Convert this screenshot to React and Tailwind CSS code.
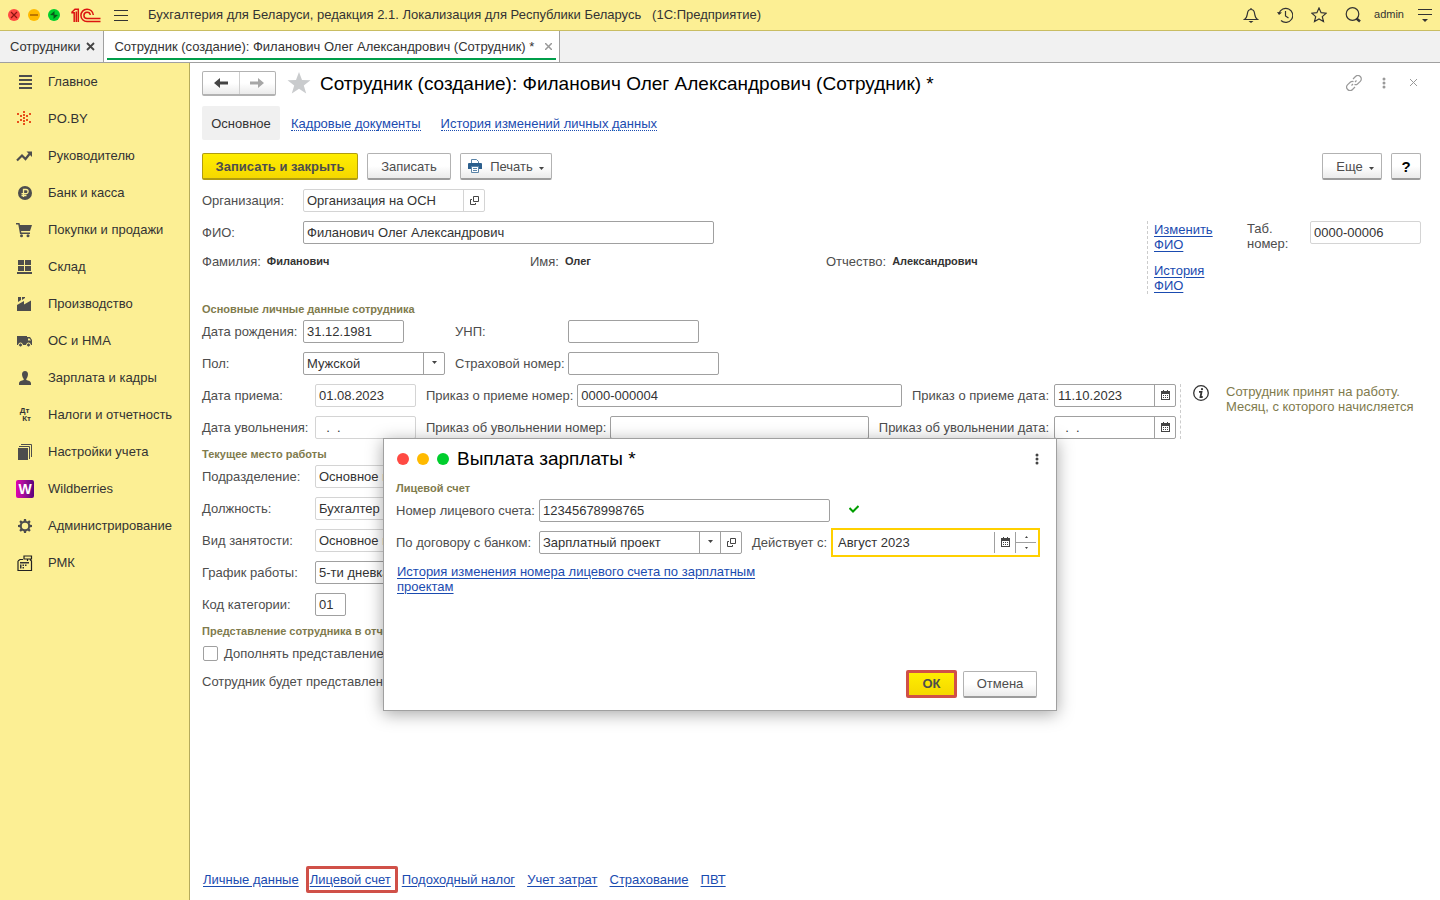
const menu = [
  { label: "Главное", icon: "list" },
  { label: "PO.BY", icon: "poby" },
  { label: "Руководителю", icon: "trend" },
  { label: "Банк и касса", icon: "ruble" },
  { label: "Покупки и продажи", icon: "cart" },
  { label: "Склад", icon: "warehouse" },
  { label: "Производство", icon: "factory" },
  { label: "ОС и НМА", icon: "truck" },
  { label: "Зарплата и кадры", icon: "person" },
  { label: "Налоги и отчетность", icon: "dtkt" },
  { label: "Настройки учета", icon: "stack" },
  { label: "Wildberries", icon: "wb" },
  { label: "Администрирование", icon: "gear" },
  { label: "РМК", icon: "register" },
];

const footerLinks = ["Подоходный налог", "Учет затрат", "Страхование", "ПВТ"];

const pobyDots = [
  [8, 1], [8, 4], [8, 7], [8, 10], [8, 13],
  [5, 5], [11, 5], [5, 9], [11, 9],
  [2, 3], [14, 3], [2, 11], [14, 11],
];

const gearTeeth = [0, 45, 90, 135, 180, 225, 270, 315];

function MenuIcon({ name }) {
  if (name === "wb") {
    return (
      <span className="flex size-[18px] items-center justify-center rounded-xs bg-linear-to-r from-[#e000b0] to-[#5a007c] text-sm font-bold text-white">
        W
      </span>
    );
  }
  if (name === "dtkt") {
    return (
      <span className="flex w-4 flex-col pr-px pl-0.5 text-[8px] leading-2 font-bold">
        <span>Дт</span>
        <span className="self-end">Кт</span>
      </span>
    );
  }
  return (
    <svg className="size-4 overflow-visible" viewBox="0 0 16 16" fill="#4d4d4d">
      {name === "list" && <path d="M3 1h13v2H3zM3 5h13v2H3zM3 9h13v2H3zM3 13h13v2H3z" />}
      {name === "poby" &&
        pobyDots.map(([x, y]) => <rect key={`${x}-${y}`} x={x - 1} y={y - 1} width="2" height="2" fill="#e8501c" />)}
      {name === "trend" && (
        <path d="M1 12.500l5-5 3.500 3.500 4-5" fill="none" stroke="#4d4d4d" strokeWidth="2.200" />
      )}
      {name === "trend" && <path d="M10.500 3.500H16V9z" />}
      {name === "ruble" && (
        <>
          <circle cx="9" cy="8" r="7" />
          <path d="M7.500 12V4.500h2.500a2 2 0 010 4.200H5.500M5.500 10.500h5" fill="none" stroke="#fcef94" strokeWidth="1.300" />
        </>
      )}
      {name === "cart" && (
        <>
          <path d="M0 1h3.500l.5 2h12l-2 6H5l.4 1.500H14V12H4L2.300 2.500H0z" />
          <circle cx="5.500" cy="13.800" r="1.500" />
          <circle cx="12" cy="13.800" r="1.500" />
        </>
      )}
      {name === "warehouse" && <path d="M2 1h6v5H2zM9 1h6v5H9zM2 7h6v5H2zM9 7h6v5H9zM1 13h15v2H1z" />}
      {name === "factory" && <path d="M2 1h3v3L2 6zM6 1h3v1L6 4zM1 15V9l7-4v3.500l7-4V15z" />}
      {name === "truck" && (
        <>
          <path d="M1 3h10v1h3l2 3v5H1z" />
          <path d="M12 5.500h1.500l1.500 2h-3z" fill="#fcef94" />
          <circle cx="4.500" cy="12" r="2" stroke="#fcef94" />
          <circle cx="12.500" cy="12" r="2" stroke="#fcef94" />
        </>
      )}
      {name === "person" && (
        <path d="M9 1c2 0 3 1.400 3 3.300C12 6.500 10.800 8.500 10.300 9v1c2 .6 4.700 1 4.700 3.500V15H3v-1.500C3 11 5.700 10.600 7.700 10V9C7.200 8.500 6 6.500 6 4.300 6 2.400 7 1 9 1z" />
      )}
      {name === "stack" && (
        <>
          <path d="M2 4h10v12H2z" />
          <path d="M3 2.500h10.500V15M5 .5h10.500V13" fill="none" stroke="#4d4d4d" />
        </>
      )}
      {name === "gear" && (
        <>
          <circle cx="9" cy="8" r="4.200" fill="none" stroke="#4d4d4d" strokeWidth="2" />
          {gearTeeth.map((a) => (
            <path key={a} d="M7.500 3.700L8 1h2l.5 2.700z" transform={`rotate(${a} 9 8)`} />
          ))}
        </>
      )}
      {name === "register" && (
        <>
          <path
            d="M2 6v9.500h13.500V6l-1.500-1.500M8 1h7.500v3H8zM11.500 4v2M2 6l2-1.500h3"
            fill="none"
            stroke="#222"
            strokeWidth="1.200"
          />
          <path d="M4 7h9v1.500H4zM4 9.500h1.500v4H4zM6.500 9.500H8v1.500H6.500zM9 9.500h1.500V11H9zM6.500 12H8v1.500H6.500z" fill="#333" />
        </>
      )}
    </svg>
  );
}

function OpenIcon() {
  return (
    <svg className="mb-px size-[9px]" viewBox="0 0 9 9" fill="none" stroke="#444">
      <path d="M3.500.5h5v5h-5zM2 3.500H.5v5h5V7" />
    </svg>
  );
}

function CalendarIcon() {
  return (
    <svg className="mb-0.5 h-2.5 w-[9px]" viewBox="0 0 9 10" fill="#444">
      <path d="M0 1h9v9H0zM1 4v5h7V4z" fillRule="evenodd" />
      <path d="M2 0h1v2H2zM6 0h1v2H6zM2 5h1v1H2zM4 5h1v1H4zM6 5h1v1H6zM2 7h1v1H2zM4 7h1v1H4zM6 7h1v1H6z" />
    </svg>
  );
}

function Caret({ className = "" }) {
  return (
    <svg className={`h-[3px] w-[5px] ${className}`} viewBox="0 0 5 3" fill="#444">
      <path d="M0 0h5L2.500 3z" />
    </svg>
  );
}

function Dots() {
  return (
    <svg className="h-3 w-1" viewBox="0 0 4 12" fill="currentColor">
      <circle cx="2" cy="2" r="1.500" />
      <circle cx="2" cy="6" r="1.500" />
      <circle cx="2" cy="10" r="1.500" />
    </svg>
  );
}

// Bordered text box, optionally with small buttons at its right side.
function Field({ id, value = "", muted, className = "", children }) {
  return (
    <div
      className={`flex h-[23px] min-w-0 rounded-xs border bg-white ${muted ? "border-[#d4d4d4]" : "border-[#a0a0a0]"} ${className}`}
    >
      <input
        id={id}
        defaultValue={value}
        readOnly={muted}
        className="w-0 min-w-0 flex-1 bg-transparent px-[3px] whitespace-pre text-[#333] outline-none"
      />
      {children}
    </div>
  );
}

function FieldButton({ label, muted, children }) {
  return (
    <button
      aria-label={label}
      className={`flex w-[21px] shrink-0 items-center justify-center border-l ${muted ? "border-[#d4d4d4]" : "border-[#a0a0a0]"}`}
    >
      {children}
    </button>
  );
}

function SelectField({ id, value, className = "", children }) {
  return (
    <div className={`flex h-[23px] rounded-xs border border-[#a0a0a0] bg-white ${className}`}>
      <div className="relative flex flex-1">
        <select id={id} defaultValue={value} className="w-full appearance-none px-[3px] text-[#333] outline-none">
          <option>{value}</option>
        </select>
        <span className="pointer-events-none absolute inset-y-0 right-0 flex w-[21px] items-center justify-center border-l border-[#a0a0a0]">
          <Caret className="mb-0.5" />
        </span>
      </div>
      {children}
    </div>
  );
}

function Button({ primary, className = "", children }) {
  return (
    <button
      className={`flex h-[27px] items-center justify-center rounded-xs border border-b-2 bg-linear-to-b ${
        primary
          ? "border-[#b09c10] from-[#ffee00] to-[#f5d800] font-bold"
          : "border-[#b2b2b2] border-b-[#9c9c9c] from-white from-50% to-[#ebebeb]"
      } ${className}`}
    >
      {children}
    </button>
  );
}

function Heading({ children }) {
  return <h2 className="text-[11px] leading-3 font-bold whitespace-nowrap text-[#7f7b4d]">{children}</h2>;
}

function Link({ className = "", children }) {
  return (
    <a href="#" className={`text-[#1a4bb0] underline underline-offset-2 ${className}`}>
      {children}
    </a>
  );
}

function TopBar() {
  return (
    <header className="flex h-[31px] shrink-0 items-center border-b border-[#c9bd62] bg-[#fcef94] pr-2 pl-2 text-[#333]">
      <div className="flex gap-2">
        <button aria-label="Закрыть">
          <svg className="size-3" viewBox="0 0 12 12">
            <circle cx="6" cy="6" r="6" fill="#ff4a43" />
            <path d="M3 3l6 6M9 3l-6 6" stroke="#8c1512" strokeWidth="1.200" />
          </svg>
        </button>
        <button aria-label="Свернуть">
          <svg className="size-3" viewBox="0 0 12 12">
            <circle cx="6" cy="6" r="6" fill="#ffba00" />
            <path d="M2 6h8" stroke="#a05c00" strokeWidth="1.400" />
          </svg>
        </button>
        <button aria-label="Развернуть">
          <svg className="size-3" viewBox="0 0 12 12">
            <circle cx="6" cy="6" r="6" fill="#00ce2d" />
            <path d="M6.500 2v4.500L2 6zM5.500 10V5.500L10 6z" fill="#07591a" />
          </svg>
        </button>
      </div>
      <svg className="ml-[11px] h-[15px] w-[30px]" viewBox="0 0 30 15" fill="none" stroke="#dc1410" strokeWidth="1.500">
        <path d="M.3 4.800H3.200V14M.6 4.500L4 1.200H7.300V14M5.300 3.500V14" />
        <path d="M22.300 7A6.200 6.200 0 1 0 16 13.600H29.500" />
        <path d="M19.300 7A3.200 3.200 0 1 0 16 10.600H29.500" />
      </svg>
      <button aria-label="Меню" className="ml-[13px] flex w-3.5 flex-col gap-1">
        <span className="h-px bg-[#333]" />
        <span className="h-px bg-[#333]" />
        <span className="h-px bg-[#333]" />
      </button>
      <h1 className="ml-5 flex-1 truncate pb-0.5">
        Бухгалтерия для Беларуси, редакция 2.1. Локализация для Республики Беларусь &nbsp; (1С:Предприятие)
      </h1>
      <div className="flex items-center gap-[18px]">
        <button aria-label="Уведомления">
          <svg className="size-4" viewBox="0 0 16 16" fill="none" stroke="#333" strokeWidth="1.200">
            <path d="M1.500 12.500C4 11 4 9 4.500 6c.3-2 1.500-3.500 3.500-3.500s3.200 1.500 3.500 3.500c.5 3 .5 5 3 6.500zM8 2.500V1" />
            <path d="M5.500 14h5L8 16z" fill="#333" stroke="none" />
          </svg>
        </button>
        <button aria-label="История">
          <svg className="size-4" viewBox="0 0 16 16" fill="none" stroke="#333" strokeWidth="1.200">
            <path d="M2 6.500A7 7 0 1 1 4 13.500M8.500 4v5l3 2" />
            <path d="M0 5l2 3 3-2.500z" fill="#333" stroke="none" />
          </svg>
        </button>
        <button aria-label="Избранное">
          <svg className="size-4" viewBox="0 0 16 16" fill="none" stroke="#333" strokeWidth="1.200">
            <path d="M8 1l2.100 4.700 5.100.5-3.900 3.400 1.200 5L8 12l-4.500 2.600 1.200-5L.8 6.200l5.100-.5z" />
          </svg>
        </button>
        <button aria-label="Поиск">
          <svg className="size-4" viewBox="0 0 16 16" fill="none" stroke="#333" strokeWidth="1.200">
            <circle cx="7.500" cy="7" r="6.300" />
            <path d="M11.500 11.500l3.500 3" strokeWidth="2.500" />
          </svg>
        </button>
      </div>
      <span className="ml-[13px] pb-0.5 text-[11px]">admin</span>
      <button aria-label="Настройки" className="ml-3.5">
        <svg className="h-3.5 w-3.5" viewBox="0 0 14 14">
          <path d="M0 1.500h14M0 6.500h14" stroke="#333" />
          <path d="M4 11h6l-3 3z" fill="#333" />
        </svg>
      </button>
    </header>
  );
}

function Tabs() {
  return (
    <nav className="flex h-8 shrink-0 border-b border-[#a0a0a0] bg-[#f1f1f1] text-[#333]">
      <button className="flex items-center gap-1.5 border-r border-[#a0a0a0] pr-2 pl-2.5">
        Сотрудники
        <svg className="size-[9px]" viewBox="0 0 9 9" stroke="#444" strokeWidth="1.800">
          <path d="M1 1l7 7M8 1L1 8" />
        </svg>
      </button>
      <button className="flex border-r border-[#a0a0a0] bg-white px-[3px] pb-0.5">
        <span className="flex h-full items-center gap-[11px] border-b-2 border-[#009e4a] pt-[3px] pr-1 pl-[7px]">
          Сотрудник (создание): Филанович Олег Александрович (Сотрудник) *
          <svg className="size-[7px]" viewBox="0 0 7 7" stroke="#999" strokeWidth="1.500">
            <path d="M0 0l7 7M7 0L0 7" />
          </svg>
        </span>
      </button>
    </nav>
  );
}

function Sidebar() {
  return (
    <aside className="w-[190px] shrink-0 border-r border-[#b5ab5c] bg-[#fcef94]">
      {menu.map((item) => (
        <button key={item.label} className="flex h-[37px] w-full items-center pl-4 text-[#333]">
          <span className="flex w-8 items-center">
            <MenuIcon name={item.icon} />
          </span>
          {item.label}
        </button>
      ))}
    </aside>
  );
}

function PageHeader() {
  return (
    <>
      <div className="flex items-center">
        <div className="flex h-[25px] w-[74px] rounded-xs border border-b-2 border-[#b2b2b2] bg-linear-to-b from-white from-50% to-[#ebebeb]">
          <button aria-label="Назад" className="flex flex-1 items-center justify-center border-r border-[#cfcfcf]">
            <svg className="h-2.5 w-3.5" viewBox="0 0 14 10" fill="#444">
              <path d="M0 5l6-5v3.500h8v3H6V10z" />
            </svg>
          </button>
          <button aria-label="Вперед" className="flex flex-1 items-center justify-center">
            <svg className="h-2.5 w-3.5" viewBox="0 0 14 10" fill="#a6a6a6">
              <path d="M14 5L8 0v3.500H0v3h8V10z" />
            </svg>
          </button>
        </div>
        <button aria-label="В избранное" className="ml-[11px]">
          <svg className="h-6 w-6" viewBox="0 0 24 24" fill="#c9cbcd">
            <path d="M12 0l3 8 8.500.2-6.700 5.200L19.200 21.500 12 16.800l-7.200 4.700 2.400-8.100L.5 8.200 9 8z" />
          </svg>
        </button>
        <h2 className="ml-[9px] flex-1 text-[19px] leading-6 text-black">
          Сотрудник (создание): Филанович Олег Александрович (Сотрудник) *
        </h2>
        <div className="flex items-center pr-1 pb-0.5 text-[#999]">
          <button aria-label="Ссылка">
            <svg className="size-4" viewBox="0 0 16 16" fill="none" stroke="currentColor" strokeWidth="1.200">
              <path d="M7 4l2.500-2.500a3.200 3.200 0 014.800 4.800L11.500 9c-1 .8-2 .9-3 .4M9 12l-2.500 2.500a3.200 3.200 0 01-4.800-4.800L4.500 7c1-.8 2-.9 3-.4M5.500 10.500l1.500-1.500M9 7l1.500-1.500" />
            </svg>
          </button>
          <button aria-label="Действия" className="ml-5">
            <Dots />
          </button>
          <button aria-label="Закрыть форму" className="ml-6">
            <svg className="size-[7px]" viewBox="0 0 7 7" stroke="currentColor">
              <path d="M0 0l7 7M7 0L0 7" />
            </svg>
          </button>
        </div>
      </div>
      <nav className="mt-2.5 flex items-center">
        <button className="h-[34px] w-[78px] rounded-xs bg-[#f0f0f0] text-[#333]">Основное</button>
        <a href="#" className="mt-px ml-[11px] border-b border-dotted border-[#1a4bb0] leading-[13px] text-[#1a4bb0]">
          Кадровые документы
        </a>
        <a href="#" className="mt-px ml-5 border-b border-dotted border-[#1a4bb0] leading-[13px] text-[#1a4bb0]">
          История изменений личных данных
        </a>
      </nav>
      <div className="mt-[13px] flex">
        <Button primary className="w-[156px]">
          Записать и закрыть
        </Button>
        <Button className="ml-[9px] w-[84px]">Записать</Button>
        <Button className="ml-[9px] w-[92px]">
          <svg className="mr-2 size-3.5" viewBox="0 0 14 14">
            <path d="M3.500 4V.5h5l2 2V4" fill="#fff" stroke="#5a84a8" />
            <path d="M0 5a1 1 0 011-1h12a1 1 0 011 1v5h-3V8H3v2H0z" fill="#2c5f8d" />
            <path d="M3.500 7.500h7v6h-7zM5 9.500h4M5 11.500h4" fill="#fff" stroke="#5a84a8" />
          </svg>
          Печать
          <Caret className="mt-1 ml-1.5" />
        </Button>
        <Button className="ml-auto w-[60px] pl-1.5">
          Еще
          <Caret className="mt-1 ml-1.5" />
        </Button>
        <Button className="ml-[9px] w-[30px] text-[15px] font-bold text-black">?</Button>
      </div>
    </>
  );
}

function NamePart({ label, value, className = "" }) {
  return (
    <div className={`flex items-center ${className}`}>
      {label}:<b className="ml-1.5 text-[11px] text-[#333]">{value}</b>
    </div>
  );
}

function PersonForm() {
  return (
    <>
      <div className="mt-[9px] flex items-center">
        <label htmlFor="org" className="w-[101px]">
          Организация:
        </label>
        <Field id="org" value="Организация на ОСН" muted className="w-[182px]">
          <FieldButton label="Открыть организацию" muted>
            <OpenIcon />
          </FieldButton>
        </Field>
      </div>

      <div className="mt-[9px] flex items-start">
        <div className="flex-1">
          <div className="flex items-center">
            <label htmlFor="fio" className="w-[101px]">
              ФИО:
            </label>
            <Field id="fio" value="Филанович Олег Александрович" className="w-[411px]" />
          </div>
          <div className="mt-2.5 flex">
            <NamePart label="Фамилия" value="Филанович" className="w-[328px]" />
            <NamePart label="Имя" value="Олег" className="w-[296px]" />
            <NamePart label="Отчество" value="Александрович" />
          </div>
        </div>
        <div className="flex h-[73px] w-[100px] flex-col gap-[11px] border-l border-dashed border-[#ccc] pt-px pr-5 pl-1.5">
          <Link>Изменить ФИО</Link>
          <Link>История ФИО</Link>
        </div>
        <label htmlFor="tab-number" className="w-[63px] pr-4">
          Таб. номер:
        </label>
        <Field id="tab-number" value="0000-00006" muted className="w-[111px]" />
      </div>

      <div className="mt-[9px]">
        <Heading>Основные личные данные сотрудника</Heading>
      </div>
      <div className="mt-[5px] grid grid-cols-[101px_152px_113px_151px] items-center gap-y-[9px]">
        <label htmlFor="birth">Дата рождения:</label>
        <Field id="birth" value="31.12.1981" className="w-[101px]" />
        <label htmlFor="unp">УНП:</label>
        <Field id="unp" className="w-[131px]" />
        <label htmlFor="sex">Пол:</label>
        <SelectField id="sex" value="Мужской" className="w-[142px]" />
        <label htmlFor="insurance">Страховой номер:</label>
        <Field id="insurance" />
      </div>

      <div className="mt-[9px] flex">
        <div className="flex flex-1 flex-col gap-[9px]">
          <div className="flex items-center">
            <label htmlFor="hired" className="w-[113px]">
              Дата приема:
            </label>
            <Field id="hired" value="01.08.2023" muted className="w-[101px]" />
            <label htmlFor="hire-no" className="mr-1 ml-2.5">
              Приказ о приеме номер:
            </label>
            <Field id="hire-no" value="0000-000004" className="flex-1" />
            <label htmlFor="hire-date" className="mr-[5px] ml-2.5">
              Приказ о приеме дата:
            </label>
            <Field id="hire-date" value="11.10.2023" className="w-[122px]">
              <FieldButton label="Выбрать дату приема">
                <CalendarIcon />
              </FieldButton>
            </Field>
          </div>
          <div className="flex items-center">
            <label htmlFor="fired" className="w-[113px]">
              Дата увольнения:
            </label>
            <Field id="fired" value="  .  ." muted className="w-[101px]" />
            <label htmlFor="fire-no" className="mr-1 ml-2.5">
              Приказ об увольнении номер:
            </label>
            <Field id="fire-no" className="flex-1" />
            <label htmlFor="fire-date" className="mr-[5px] ml-2.5">
              Приказ об увольнении дата:
            </label>
            <Field id="fire-date" value="  .  ." className="w-[122px]">
              <FieldButton label="Выбрать дату увольнения">
                <CalendarIcon />
              </FieldButton>
            </Field>
          </div>
        </div>
        <div className="ml-1 flex w-[241px] border-l border-dashed border-[#ccc] pl-3">
          <svg className="mt-px size-4 shrink-0" viewBox="0 0 16 16" fill="none" stroke="#333" strokeWidth="1.300">
            <circle cx="8" cy="8" r="7.300" />
            <path d="M6 6.800h2.500L7.500 12h2.200" strokeWidth="1.800" />
            <circle cx="9" cy="4.200" r="1.100" fill="#333" stroke="none" />
          </svg>
          <p className="ml-[17px] text-[#7f7b4d]">Сотрудник принят на работу. Месяц, с которого начисляется</p>
        </div>
      </div>

      <div className="mt-[9px]">
        <Heading>Текущее место работы</Heading>
      </div>
      <div className="mt-[5px] grid grid-cols-[113px_340px] items-center gap-y-[9px]">
        <label htmlFor="department">Подразделение:</label>
        <Field id="department" value="Основное подразделение" muted />
        <label htmlFor="position">Должность:</label>
        <Field id="position" value="Бухгалтер" muted />
        <label htmlFor="employment">Вид занятости:</label>
        <Field id="employment" value="Основное место работы" muted />
        <label htmlFor="schedule">График работы:</label>
        <Field id="schedule" value="5-ти дневка" />
        <label htmlFor="category">Код категории:</label>
        <Field id="category" value="01" className="w-[31px]" />
      </div>

      <div className="mt-[9px]">
        <Heading>Представление сотрудника в отчетах</Heading>
      </div>
      <div className="mt-[9px] flex items-center gap-1.5">
        <input
          id="extend"
          type="checkbox"
          className="ml-px size-[15px] appearance-none rounded-xs border border-[#a0a0a0] bg-white checked:bg-[#ffe600]"
        />
        <label htmlFor="extend">Дополнять представление</label>
      </div>
      <p className="mt-[13px]">Сотрудник будет представлен</p>
    </>
  );
}

function SalaryDialog() {
  return (
    <section
      role="dialog"
      aria-label="Выплата зарплаты"
      className="absolute top-[438px] left-1/2 w-[674px] -translate-x-1/2 border border-[#a0a0a0] bg-white px-3 pb-3 shadow-[0_3px_16px_rgba(0,0,0,0.35)]"
    >
      <div className="flex h-10 items-center pr-[5px] pl-px">
        <button aria-label="Закрыть окно" className="size-3 rounded-full bg-[#ff4a43]" />
        <button aria-label="Свернуть окно" className="ml-2 size-3 rounded-full bg-[#ffba00]" />
        <button aria-label="Развернуть окно" className="ml-2 size-3 rounded-full bg-[#00ce2d]" />
        <h2 className="ml-2 flex-1 text-[19px] leading-6 text-black">Выплата зарплаты *</h2>
        <button aria-label="Действия окна" className="text-[#444]">
          <Dots />
        </button>
      </div>
      <div className="mt-[3px]">
        <Heading>Лицевой счет</Heading>
      </div>
      <div className="mt-[5px] flex items-center">
        <label htmlFor="account" className="w-[143px]">
          Номер лицевого счета:
        </label>
        <Field id="account" value="12345678998765" className="w-[291px]" />
        <svg className="mb-1 ml-[19px] h-2 w-2.5" viewBox="0 0 10 8" fill="none" stroke="#009e00" strokeWidth="2">
          <path d="M.5 3l3.500 3.500L9.500 1" />
        </svg>
      </div>
      <div className="mt-1.5 flex items-center">
        <label htmlFor="contract" className="w-[143px]">
          По договору с банком:
        </label>
        <SelectField id="contract" value="Зарплатный проект" className="w-[203px]">
          <FieldButton label="Открыть договор">
            <OpenIcon />
          </FieldButton>
        </SelectField>
        <label htmlFor="valid-from" className="ml-2.5 w-[79px]">
          Действует с:
        </label>
        <div className="flex h-[29px] w-[209px] border-2 border-[#ffd000] py-0.5 pr-0.5 pl-1">
          <input
            id="valid-from"
            defaultValue="Август 2023"
            className="w-0 flex-1 bg-transparent pl-px text-[#333] outline-none"
          />
          <FieldButton label="Выбрать месяц">
            <CalendarIcon />
          </FieldButton>
          <div className="flex w-[21px] flex-col border-l border-[#a0a0a0]">
            <button
              aria-label="Следующий месяц"
              className="flex flex-1 items-center justify-center border-b border-[#a0a0a0]"
            >
              <svg className="h-0.5 w-[3px]" viewBox="0 0 3 2" fill="#444">
                <path d="M0 2h3L1.500 0z" />
              </svg>
            </button>
            <button aria-label="Предыдущий месяц" className="flex flex-1 items-center justify-center">
              <svg className="h-0.5 w-[3px]" viewBox="0 0 3 2" fill="#444">
                <path d="M0 0h3L1.500 2z" />
              </svg>
            </button>
          </div>
        </div>
      </div>
      <p className="mt-[7px] ml-px w-[380px]">
        <Link>История изменения номера лицевого счета по зарплатным проектам</Link>
      </p>
      <div className="mt-[76px] flex items-center justify-end gap-1.5 pr-[7px]">
        <div className="rounded-xs border-3 border-[#d05048]">
          <button className="flex h-[22px] w-[45px] items-center justify-center bg-linear-to-b from-[#ffee00] to-[#f5d800] pb-0.5 font-bold">
            ОК
          </button>
        </div>
        <Button className="w-[74px]">Отмена</Button>
      </div>
    </section>
  );
}

export default function App() {
  return (
    <div className="relative flex min-h-screen flex-col bg-white font-['Liberation_Sans',Arial,sans-serif] text-[13px] leading-[15px] text-[#4d4d4d]">
      <TopBar />
      <Tabs />
      <div className="flex flex-1">
        <Sidebar />
        <main className="flex min-w-0 flex-1 flex-col pt-2 pr-[19px] pb-[7px] pl-3">
          <PageHeader />
          <PersonForm />
          <nav className="mt-auto flex items-center">
            <Link className="mr-[7px] ml-px">Личные данные</Link>
            <span className="flex h-[27px] items-center rounded-xs border-3 border-[#d05048] pr-1 pl-px">
              <Link>Лицевой счет</Link>
            </span>
            <div className="ml-1 flex gap-3">
              {footerLinks.map((text) => (
                <Link key={text}>{text}</Link>
              ))}
            </div>
          </nav>
        </main>
      </div>
      <SalaryDialog />
    </div>
  );
}
